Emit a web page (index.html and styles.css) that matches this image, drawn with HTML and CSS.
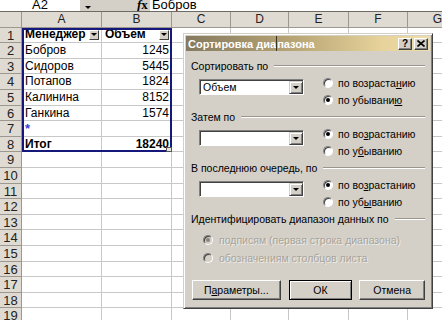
FILE: index.html
```html
<!DOCTYPE html>
<html lang="ru">
<head>
    <meta charset="UTF-8">
    <meta name="viewport" content="width=device-width, initial-scale=1.0">
    <title>Сортировка диапазона</title>
    <link rel="stylesheet" href="styles.css">
</head>
<body>

<div class="screen">

    <!-- Formula bar (top of it is cut off) -->
    <div class="formula-bar">
        <div class="name-box">A2</div>
        <div class="name-arrow"><span class="tri"></span></div>
        <div class="fx"><i>f</i>x</div>
        <div class="formula-input">Бобров</div>
    </div>

    <!-- Worksheet, cells are filled in by the script below -->
    <div class="sheet" id="sheet">
        <div class="list-frame"><span class="list-handle"></span></div>
    </div>

    <!-- Sort dialog -->
    <div class="dialog">
        <div class="title-bar">
            <span class="title-text">Сортировка диа<span class="caret"></span>пазона</span>
            <div class="title-buttons">
                <span class="title-btn">?</span>
                <span class="title-btn">
                    <svg width="8" height="7" viewBox="0 0 8 7"><path d="M0.5 0.5 L7.5 6.5 M7.5 0.5 L0.5 6.5" stroke="#000" stroke-width="1.6"/></svg>
                </span>
            </div>
        </div>

        <div class="dialog-body">
            <div class="section">
                <div class="group-label">Сортировать по</div>
                <div class="sort-row">
                    <div class="combo"><span class="combo-text">Объем</span><span class="combo-btn"><span class="tri"></span></span></div>
                    <div class="radios">
                        <div class="radio"><span class="dot"></span><span>по возраста<u>н</u>ию</span></div>
                        <div class="radio checked"><span class="dot"></span><span>по убывани<u>ю</u></span></div>
                    </div>
                </div>
            </div>

            <div class="section">
                <div class="group-label">Затем по</div>
                <div class="sort-row">
                    <div class="combo"><span class="combo-text"></span><span class="combo-btn"><span class="tri"></span></span></div>
                    <div class="radios">
                        <div class="radio checked"><span class="dot"></span><span>по во<u>з</u>растанию</span></div>
                        <div class="radio"><span class="dot"></span><span>по у<u>б</u>ыванию</span></div>
                    </div>
                </div>
            </div>

            <div class="section">
                <div class="group-label">В последнюю очередь, по</div>
                <div class="sort-row">
                    <div class="combo"><span class="combo-text"></span><span class="combo-btn"><span class="tri"></span></span></div>
                    <div class="radios">
                        <div class="radio checked"><span class="dot"></span><span>по во<u>з</u>растанию</span></div>
                        <div class="radio"><span class="dot"></span><span>по уб<u>ы</u>ванию</span></div>
                    </div>
                </div>
            </div>

            <div class="group-label">Идентифицировать диапазон данных по</div>
            <div class="radios disabled">
                <div class="radio checked"><span class="dot"></span><span>подписям (первая строка диапазона)</span></div>
                <div class="radio"><span class="dot"></span><span>обозначениям столбцов листа</span></div>
            </div>

            <div class="buttons">
                <span class="btn btn-params"><span>П<u>а</u>раметры...</span></span>
                <span class="btn btn-ok">ОК</span>
                <span class="btn btn-cancel">Отмена</span>
            </div>
        </div>
    </div>

</div>

<script>
    // Sheet data: rows 1..8 hold the list, the rest stay empty
    let columns = ['A', 'B', 'C', 'D', 'E', 'F', 'G'];
    let data = {
        1: [{ text: 'Менеджер', head: true }, { text: 'Объем', head: true }],
        2: ['Бобров', 1245],
        3: ['Сидоров', 5445],
        4: ['Потапов', 1824],
        5: ['Калинина', 8152],
        6: ['Ганкина', 1574],
        7: [{ text: '*', star: true }, ''],
        8: [{ text: 'Итог', bold: true }, { text: '18240', bold: true, num: true }]
    };

    let sheet = document.getElementById('sheet');

    function addCell(cls, html) {
        let cell = document.createElement('div');
        cell.className = cls;
        cell.innerHTML = html;
        sheet.appendChild(cell);
    }

    // Column headers
    addCell('col-head corner', '');
    columns.forEach(col => addCell('col-head', col));

    // Rows
    for (let r = 1; r <= 19; r++) {
        addCell('row-head', r);
        let row = data[r] || [];
        columns.forEach((col, i) => {
            let value = row[i];
            if (value === undefined || value === '') {
                addCell('cell', '');
            } else if (typeof value === 'number') {
                addCell('cell num', value);
            } else if (typeof value === 'string') {
                addCell('cell', value);
            } else if (value.head) {
                addCell('cell bold head-cell', `<span>${value.text}</span><span class="drop-btn"><span class="tri"></span></span>`);
            } else if (value.star) {
                addCell('cell star', value.text);
            } else {
                addCell('cell bold' + (value.num ? ' num' : ''), value.text);
            }
        });
    }
</script>

</body>
</html>
```

FILE: styles.css
```css
* {
    box-sizing: border-box;
}

body {
    margin: 0;
    background: #fff;
}

.screen {
    position: relative;
    width: 442px;
    height: 320px;
    overflow: hidden;
    background: #fff;
    font-family: "Liberation Sans", Arial, sans-serif;
    color: #000;
}

/* ---------- formula bar ---------- */

.formula-bar {
    display: flex;
    height: 12px;
    overflow: hidden;
    background: #d4d0c8;
    border-bottom: 1px solid #6d6a64;
    font-size: 13px;
}

.formula-bar > div {
    flex-shrink: 0;
    height: 17px;
    margin-top: -4px;
    line-height: 17px;
}

.name-box {
    width: 80px;
    background: #fff;
    text-align: center;
}

.name-arrow {
    width: 16px;
    display: flex;
    justify-content: center;
    align-items: center;
    padding-top: 6px;
}

.fx {
    width: 54px;
    padding-left: 41px;
    font-weight: bold;
    font-family: "Liberation Serif", serif;
}

.formula-input {
    flex: 1;
    background: #fff;
    padding-left: 2px;
}

.tri {
    display: inline-block;
    width: 0;
    height: 0;
    border-left: 3px solid transparent;
    border-right: 3px solid transparent;
    border-top: 3px solid #000;
}

/* ---------- worksheet ---------- */

.sheet {
    position: relative;
    display: grid;
    grid-template-columns: 22px 80px 70px 59px 58px 60px 59px 60px;
    grid-auto-rows: 15.6px;
    font-size: 12px;
}

.col-head,
.row-head {
    background: #dfdbd3;
    border-right: 1px solid #9c988f;
    border-bottom: 1px solid #9c988f;
    text-align: center;
    line-height: 15px;
    color: #222;
}

.row-head {
    font-size: 13px;
}

.cell {
    border-right: 1px solid #c8c8c8;
    border-bottom: 1px solid #c8c8c8;
    padding: 0 3px;
    line-height: 15px;
    white-space: nowrap;
    overflow: hidden;
}

.num {
    text-align: right;
    padding-right: 2px;
}

.bold {
    font-weight: bold;
}

.head-cell {
    display: flex;
    justify-content: space-between;
    align-items: center;
    padding-right: 2px;
}

.drop-btn {
    width: 10px;
    height: 10px;
    display: flex;
    justify-content: center;
    align-items: center;
    background: #d4d0c8;
    border: 1px solid;
    border-color: #fff #404040 #404040 #fff;
}

.star {
    color: #3b3bd6;
    font-weight: bold;
    font-size: 13px;
}

.list-frame {
    position: absolute;
    left: 22px;
    top: 16px;
    width: 150px;
    height: 124px;
    border: 2px solid #15177a;
    pointer-events: none;
}

.list-handle {
    position: absolute;
    right: -2px;
    bottom: -2px;
    width: 6px;
    height: 5px;
    background: #e4e4e4;
    border: 1px solid #555;
}

/* ---------- dialog ---------- */

.dialog {
    position: absolute;
    left: 183px;
    top: 33px;
    width: 250px;
    height: 276px;
    padding: 2px;
    background: #d4d0c8;
    border: 1px solid;
    border-color: #d4d0c8 #404040 #404040 #d4d0c8;
    box-shadow: inset 1px 1px 0 #fff, inset -1px -1px 0 #808080;
    font-size: 11px;
}

.title-bar {
    display: flex;
    justify-content: space-between;
    align-items: center;
    height: 15px;
    padding: 0 2px;
    background: linear-gradient(to right, #857a60, #b9a676 45%, #e6d29a 80%, #f0dfa8);
}

.title-text {
    color: #fff;
    font-weight: bold;
    display: flex;
    align-items: center;
}

.caret {
    display: inline-block;
    width: 1px;
    height: 15px;
    background: #3b3322;
}

.title-buttons {
    display: flex;
    gap: 2px;
}

.title-btn {
    width: 14px;
    height: 12px;
    display: flex;
    justify-content: center;
    align-items: center;
    background: #d4d0c8;
    border: 1px solid;
    border-color: #fff #404040 #404040 #fff;
    box-shadow: inset -1px -1px 0 #808080;
    font-weight: bold;
    font-size: 10px;
    line-height: 10px;
}

.dialog-body {
    padding: 8px 5px 0 5px;
    font-size: 10.5px;
}

.section {
    margin-bottom: 2px;
}

.group-label {
    display: flex;
    align-items: center;
    gap: 6px;
    height: 14px;
    white-space: nowrap;
}

.group-label::after {
    content: "";
    flex: 1;
    border-top: 1px solid #9a968d;
    border-bottom: 1px solid #fff;
}

.sort-row {
    display: flex;
    margin-top: 1px;
}

.combo {
    display: flex;
    width: 105px;
    height: 16px;
    margin: 5px 0 0 8px;
    background: #fff;
    border: 1px solid;
    border-color: #808080 #fff #fff #808080;
    box-shadow: inset 1px 1px 0 #404040;
}

.combo-text {
    flex: 1;
    padding: 1px 0 0 3px;
    line-height: 13px;
}

.combo-btn {
    width: 14px;
    margin: 1px 0 0 0;
    display: flex;
    justify-content: center;
    align-items: center;
    background: #d4d0c8;
    border: 1px solid;
    border-color: #d4d0c8 #404040 #404040 #d4d0c8;
    box-shadow: inset 1px 1px 0 #fff, inset -1px -1px 0 #808080;
}

.radios {
    margin-left: 19px;
}

.radio {
    display: flex;
    align-items: center;
    gap: 5px;
    height: 17px;
    white-space: nowrap;
}

.dot {
    position: relative;
    width: 10px;
    height: 10px;
    border-radius: 50%;
    background: #fff;
    border: 1px solid;
    border-color: #808080 #fff #fff #808080;
    box-shadow: inset 1px 1px 0 #404040;
}

.checked .dot::after {
    content: "";
    position: absolute;
    left: 2px;
    top: 2px;
    width: 4px;
    height: 4px;
    border-radius: 50%;
    background: #000;
}

.radios.disabled {
    margin: 5px 0 0 12px;
    color: #a8a49b;
    text-shadow: 1px 1px 0 #eeece7;
}

.disabled .radio {
    height: 18px;
    gap: 6px;
}

.disabled .dot {
    background: #d4d0c8;
}

.disabled .checked .dot::after {
    background: #8a867e;
}

.buttons {
    display: flex;
    margin: 13px 0 0 1px;
}

.btn {
    display: flex;
    justify-content: center;
    align-items: center;
    height: 20px;
    background: #d4d0c8;
    border: 1px solid;
    border-color: #fff #404040 #404040 #fff;
    box-shadow: inset -1px -1px 0 #808080;
}

.btn-params {
    width: 89px;
}

.btn-ok {
    width: 64px;
    margin-left: 8px;
    border-color: #000;
    box-shadow: inset 1px 1px 0 #fff, inset -1px -1px 0 #808080;
}

.btn-cancel {
    width: 66px;
    margin-left: 7px;
}
```
